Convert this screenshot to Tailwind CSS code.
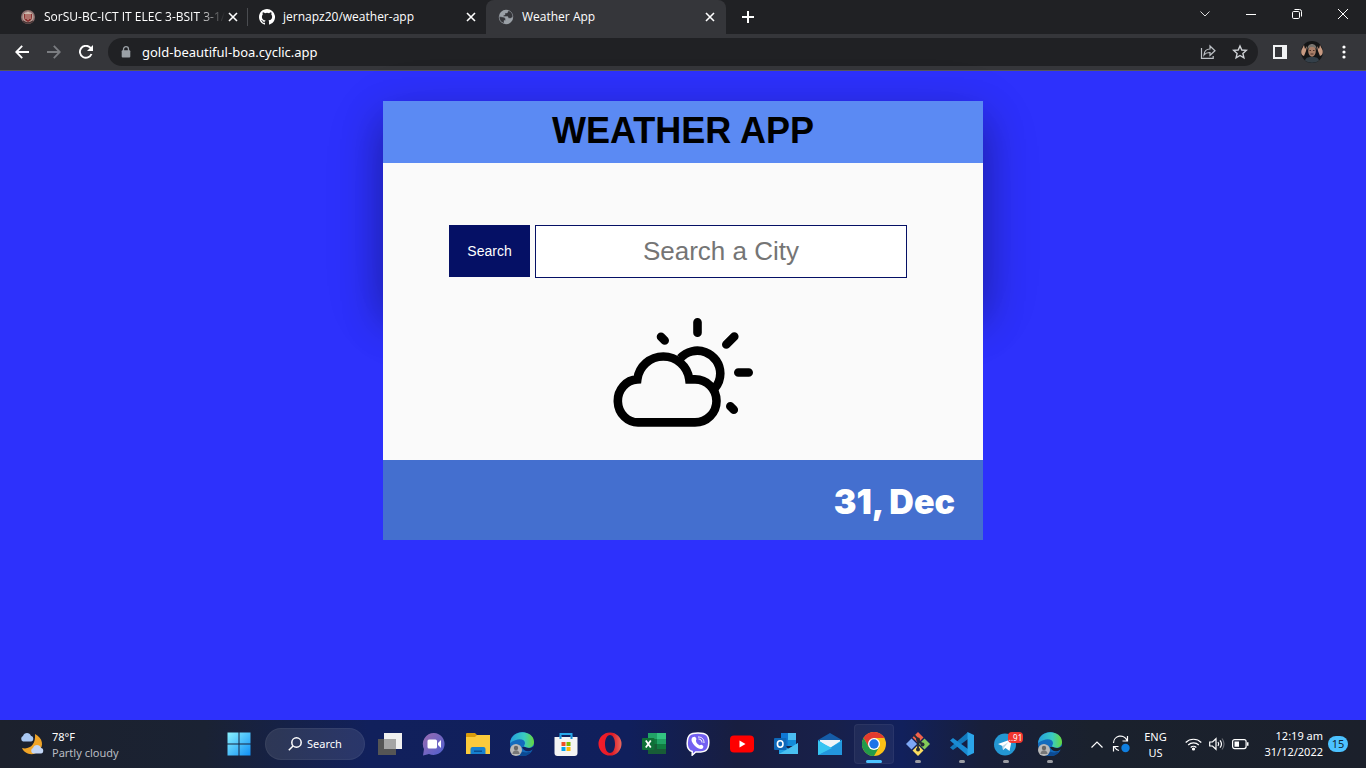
<!DOCTYPE html>
<html lang="en">
<head>
<meta charset="utf-8">
<title>Weather App</title>
<script src="https://cdn.jsdelivr.net/npm/@tailwindcss/browser@4"></script>
</head>
<body class="flex h-screen flex-col overflow-hidden bg-[#2d31fc] font-['Noto_Sans',sans-serif] text-white">

<!-- Tab strip -->
<header class="shrink-0 bg-[#202124]">
  <div class="flex h-[34px] items-stretch">
    <div class="flex w-[247px] items-center pl-5 pr-[7px]">
      <svg class="mr-2 size-4 shrink-0" viewBox="0 0 16 16"><circle cx="8" cy="8" r="7" fill="#8d7070"/><circle cx="8" cy="8" r="5.500" fill="#b9a39a"/><path d="M4 5h8v3c0 3-2 4-4 5-2-1-4-2-4-5z" fill="#8a2f2f"/><path d="M6 4v6M8 3v8M10 4v6" stroke="#e8d9c8" stroke-width=".8"/><path d="M3 12q5 4 10 0" stroke="#4c3535" fill="none" stroke-width="1.500"/></svg>
      <span class="flex-1 whitespace-nowrap font-['Open_Sans',sans-serif] text-xs [mask-image:linear-gradient(to_right,black_85%,transparent)]">SorSU-BC-ICT IT ELEC 3-BSIT 3-1/</span>
      <button aria-label="Close tab" class="grid size-4 shrink-0 place-items-center"><svg class="size-[10px]" viewBox="0 0 10 10" stroke="#fff" stroke-width="1.600"><path d="M1 1l8 8M9 1l-8 8"/></svg></button>
    </div>
    <div class="my-2 w-px bg-[#4a4c50]"></div>
    <div class="flex w-[238px] items-center pl-[11px] pr-[7px]">
      <svg class="mr-2 size-4 shrink-0" viewBox="0 0 16 16" fill="#fff"><path d="M8 0C3.58 0 0 3.58 0 8c0 3.54 2.29 6.53 5.47 7.59.4.07.55-.17.55-.38v-1.49c-2.23.48-2.7-.95-2.7-.95-.36-.92-.89-1.17-.89-1.17-.73-.5.05-.49.05-.49.81.06 1.23.83 1.23.83.72 1.23 1.88.87 2.34.67.07-.52.28-.87.51-1.07-1.78-.2-3.64-.89-3.64-3.95 0-.87.31-1.59.82-2.15-.08-.2-.36-1.02.08-2.12 0 0 .67-.21 2.2.82a7.6 7.6 0 0 1 4 0c1.53-1.04 2.2-.82 2.2-.82.44 1.1.16 1.92.08 2.12.51.56.82 1.27.82 2.15 0 3.07-1.87 3.75-3.65 3.95.29.25.54.73.54 1.48v2.19c0 .21.15.46.55.38A8 8 0 0 0 8 0"/></svg>
      <span class="flex-1 whitespace-nowrap font-['Open_Sans',sans-serif] text-xs">jernapz20/weather-app</span>
      <button aria-label="Close tab" class="grid size-4 shrink-0 place-items-center"><svg class="size-[10px]" viewBox="0 0 10 10" stroke="#fff" stroke-width="1.600"><path d="M1 1l8 8M9 1l-8 8"/></svg></button>
    </div>
    <div class="flex w-[240px] items-center rounded-t-lg bg-[#35363a] pl-3 pr-2">
      <svg class="mr-2 size-4 shrink-0" viewBox="0 0 16 16"><circle cx="8" cy="8" r="7.200" fill="#9aa0a6"/><path d="M10.500 1.500 9.200 4H7v2H5.500v1.500h4.200l.8 1.800h2.300l2-1.300a6.800 6.800 0 0 0-4.300-6.500M1.200 7.500l5 .8 1.300 1.500v1.700H6v2.800A7 7 0 0 1 1.200 7.500" fill="#35363a" stroke="#9aa0a6" stroke-width=".4"/></svg>
      <span class="flex-1 whitespace-nowrap font-['Open_Sans',sans-serif] text-xs">Weather App</span>
      <button aria-label="Close tab" class="grid size-4 shrink-0 place-items-center"><svg class="size-[10px]" viewBox="0 0 10 10" stroke="#fff" stroke-width="1.600"><path d="M1 1l8 8M9 1l-8 8"/></svg></button>
    </div>
    <button aria-label="New tab" class="grid w-11 place-items-center"><svg class="size-3" viewBox="0 0 12 12" stroke="#fff" stroke-width="2"><path d="M6 0v12M0 6h12"/></svg></button>
    <div class="ml-auto flex pb-[6px]">
      <button aria-label="Search tabs" class="grid w-[46px] place-items-center"><svg class="h-[6px] w-[10px]" viewBox="0 0 10 6" fill="none" stroke="#ddd"><path d="M.5.5 5 5 9.500.5"/></svg></button>
      <button aria-label="Minimize" class="grid w-[46px] place-items-center"><svg class="size-[10px]" viewBox="0 0 10 10" stroke="#fff"><path d="M0 5.500h10"/></svg></button>
      <button aria-label="Restore" class="grid w-[46px] place-items-center"><svg class="size-[10px]" viewBox="0 0 10 10" fill="none" stroke="#fff"><rect x=".5" y="2.500" width="7" height="7" rx="1.200"/><path d="M2.500.5h5a2 2 0 0 1 2 2v5"/></svg></button>
      <button aria-label="Close" class="grid w-[46px] place-items-center"><svg class="size-[10px]" viewBox="0 0 10 10" stroke="#fff"><path d="M0 0l10 10M10 0 0 10"/></svg></button>
    </div>
  </div>
  <!-- Toolbar -->
  <div class="flex h-[37px] items-center border-b border-[#55565b] bg-[#35363a]">
    <button aria-label="Back" class="ml-[6px] grid size-8 place-items-center"><svg class="size-[14px]" viewBox="0 0 14 14" fill="none" stroke="#fff" stroke-width="1.800"><path d="M14 7H1.500M7.200.9 1.200 7l6 6.100"/></svg></button>
    <button aria-label="Forward" class="grid size-8 place-items-center"><svg class="size-[14px]" viewBox="0 0 14 14" fill="none" stroke="#7b7d81" stroke-width="1.800"><path d="M0 7h12.500M6.800.9l6 6.100-6 6.100"/></svg></button>
    <button aria-label="Reload" class="grid size-8 place-items-center"><svg class="size-[14px]" viewBox="0 0 14 14"><path d="M12.500 9A6 6 0 1 1 11.300 2.700L13 4.500" fill="none" stroke="#fff" stroke-width="1.900"/><path d="M14 0v6H8z" fill="#fff"/></svg></button>
    <div class="ml-[6px] flex h-7 flex-1 items-center gap-[10px] rounded-full bg-[#202124] pl-[13px] pr-[10px]">
      <svg class="h-3 w-[10px] shrink-0" viewBox="0 0 10 12"><path d="M2.500 5V3.200a2.500 2.500 0 0 1 5 0V5" fill="none" stroke="#9aa0a6" stroke-width="1.300"/><rect x=".7" y="4.300" width="8.600" height="7.300" rx="1" fill="#9aa0a6"/></svg>
      <input aria-label="Address" value="gold-beautiful-boa.cyclic.app" class="min-w-0 flex-1 bg-transparent pt-px pl-px text-[13px] outline-none">
      <button aria-label="Share"><svg class="size-4" viewBox="0 0 16 16" fill="none" stroke="#bdc1c6" stroke-width="1.200"><path d="M1.500 4v10.400h11.700V12"/><path d="M4 11c.3-4 2.500-6 6-6V2l5 4.700-5 4.600V8.500C7.500 8.400 5.500 9 4 11z"/></svg></button>
      <button aria-label="Bookmark" class="ml-[6px]"><svg class="size-4" viewBox="0 0 16 16" fill="none" stroke="#d0d3d7" stroke-width="1.400"><path d="m8 2 1.800 4 4.500.4-3.400 3 1 4.400L8 11.500l-3.900 2.300 1-4.400-3.400-3L6.200 6z"/></svg></button>
    </div>
    <button aria-label="Side panel" class="ml-[14px]"><svg class="size-4" viewBox="0 0 16 16"><path fill="#f1f3f4" fill-rule="evenodd" d="M1 1h14v14H1zM3 3v10h7V3z"/></svg></button>
    <button aria-label="Profile" class="ml-3"><svg class="size-6" viewBox="0 0 24 24"><circle cx="12" cy="12" r="11" fill="#141516"/><path d="M1.500 10 4 5l1 4 2-3-1 5-2 5c-3-1-3-4-2.500-6M22.500 10 20 5l-1 4-2-3 1 5 2 5c3-1 3-4 2.500-6" fill="#c79a82"/><path d="M5 20.500c1-3.500 4-3.500 7-3.500s6 0 7 3.500c-4 3-10 3-14 0" fill="#34404a"/><ellipse cx="12" cy="11" rx="3.800" ry="5.800" fill="#a87e68"/><path d="M7.500 10c-1-8 10-8 9 0-1-3-3-3-4.500-3s-3.500 0-4.500 3" fill="#77736d"/><path d="M9.500 10.500H11M13 10.500h1.500M10.500 14h3" stroke="#4a3028"/></svg></button>
    <button aria-label="Menu" class="ml-3 mr-[14px]"><svg class="h-[14px] w-4" viewBox="0 0 16 14" fill="#fff"><circle cx="8" cy="2" r="1.600"/><circle cx="8" cy="7" r="1.600"/><circle cx="8" cy="12" r="1.600"/></svg></button>
  </div>
</header>

<!-- Weather page -->
<main class="min-h-0 flex-1 px-4 pt-[30px] font-['Liberation_Sans',Arial,sans-serif]">
  <div class="mx-auto h-[200px] max-w-[600px] shadow-[0_19px_38px_rgba(0,0,0,0.3),0_15px_60px_rgba(0,0,0,0.12)]">
    <h1 class="bg-[#5b8af3] pb-[2px] text-center text-4xl/[60px] font-bold text-black">WEATHER APP</h1>
    <div class="flex flex-col items-center bg-[#fafafa] pt-[62px] pb-[33px]">
      <form class="flex w-full items-start gap-[5px] pl-[66px] pr-[76px]" onsubmit="return false">
        <button class="h-[52px] w-[81px] shrink-0 bg-[#051065] text-sm text-white">Search</button>
        <input aria-label="City" placeholder="Search a City" class="h-[53px] min-w-0 flex-1 border border-[#051065] bg-white text-center text-[26px] text-black outline-none placeholder:text-[#757575]">
      </form>
      <svg class="mt-10 h-[109px] w-[140px]" viewBox="0 0 140 109" fill="none" stroke="#000" stroke-width="8.600">
        <path d="M67.300 40.200A23 23 0 0 1 107.300 55.500A23 23 0 0 1 102 70"/>
        <path d="M24.300 61.400A20.300 21.500 0 0 0 26 104.400H82A21.500 21.500 0 0 0 82 61.400H76.300A26.200 26.200 0 0 0 24.300 61.400z" fill="#fafafa"/>
        <path d="M84.500 4.300v10.400M125.300 54.500h10.400M113.300 26.500l8-8M48 18.800l3.700 3.700M117.300 88.300l3.500 3.500" stroke-linecap="round"/>
      </svg>
    </div>
    <footer class="flex h-20 items-center justify-end bg-[#446fcf] pt-[2px] pr-7 text-[34px] font-black text-white"><time datetime="2022-12-31" class="font-['Inter','Liberation_Sans',sans-serif]">31, Dec</time></footer>
  </div>
</main>

<!-- Taskbar -->
<nav aria-label="Taskbar" class="flex h-12 shrink-0 items-stretch justify-between bg-[linear-gradient(90deg,#1c212d_0%,#1a2233_15%,#11205c_27%,#101f5c_46%,#181e40_54%,#18204a_61%,#11205c_66%,#181f3a_72%,#1a212d_80%,#1b202b_100%)]">
  <div class="flex">
    <button class="flex w-[216px] items-center gap-2 pl-[19px] text-left text-[11px]/4">
      <svg class="size-[25px]" viewBox="0 0 25 25"><path d="M16 2c8 4 9 12 4 17-5 5-14 4-17-3 8 2 14-4 13-14z" fill="#f0a427"/><path d="M4 9.500a3 3 0 0 1 0-5.500c1-4 7-4 8 0 3 0 3 5.500 0 5.500z" fill="#a9c8f3"/><path d="M14 21.500a3 3 0 0 1 0-5.500c1-4 7-4 8 0 3 0 3 5.500 0 5.500z" fill="#c3d6f5"/></svg>
      <span class="pt-px">78°F<br><span class="text-[#b9bcc2]">Partly cloudy</span></span>
    </button>
    <button aria-label="Start" class="grid w-[46px] place-items-center"><svg class="size-6" viewBox="0 0 24 24"><defs><linearGradient id="win" gradientUnits="userSpaceOnUse" x1="0" y1="0" x2="24" y2="24"><stop stop-color="#8df4ff"/><stop offset="1" stop-color="#0d8df5"/></linearGradient></defs><path fill="url(#win)" d="M.5.5h11v11H.5zM12.500.5h11v11h-11zM.5 12.500h11v11H.5zM12.500 12.500h11v11h-11z"/></svg></button>
    <button class="mx-[3px] my-2 flex w-[100px] items-center justify-center gap-[5px] rounded-full border border-white/5 bg-white/10 text-[11px]"><svg class="size-[14px]" viewBox="0 0 14 14" fill="none" stroke="#fff" stroke-width="1.500"><circle cx="8.500" cy="5.500" r="4.700"/><path d="M5 9 .8 13.200"/></svg>Search</button>
    <div class="flex">
      <button aria-label="Task view" class="grid w-11 place-items-center"><svg class="size-6" viewBox="0 0 24 24"><path d="M6 1h18v16H6z" fill="#f0f0f0"/><path d="M0 7h18v16H0z" fill="#555"/><path d="M6 7h12v10H6z" fill="#a5a5a5"/></svg></button>
      <button aria-label="Chat" class="grid w-11 place-items-center"><svg class="size-6" viewBox="0 0 24 24"><defs><linearGradient id="chat" x2="1" y2="1"><stop stop-color="#9a6bb0"/><stop offset="1" stop-color="#4c5fd0"/></linearGradient></defs><path d="M12 1a11 11 0 1 1-5 21L1 23.500 2 17A11 11 0 0 1 12 1" fill="url(#chat)"/><rect x="5.500" y="7.500" width="9.500" height="9" rx="1.500" fill="#fff"/><path d="m16 11 3-3v8l-3-3z" fill="#fff"/></svg></button>
      <button aria-label="File Explorer" class="grid w-11 place-items-center"><svg class="size-6" viewBox="0 0 24 24"><path d="M0 2q0-1 1-1h8l2 2v5H0z" fill="#d99b0c"/><path d="M0 5h9l2-2h13v19H0z" fill="#fbca3c"/><path d="M4.500 22v-5q0-2 2-2h11q2 0 2 2v5z" fill="#1680d0"/><path d="M8 18.500h8V20H8z" fill="#0b4f91"/></svg></button>
      <button aria-label="Edge" class="grid w-11 place-items-center"><svg class="size-6" viewBox="0 0 24 24"><defs><linearGradient id="eg" x2="1"><stop stop-color="#249fdf"/><stop offset=".6" stop-color="#3acbc0"/><stop offset="1" stop-color="#66d83c"/></linearGradient></defs><circle cx="12" cy="12" r="12" fill="#146bbd"/><path d="M0 11C2-4 24-2 24 10c0 5-5 7-9 5-2-1 0-2 0-4 0-4-7-6-15 0" fill="url(#eg)"/><path d="M9 12c-3 6 5 11 13 7-6 9-18 5-18-1 0-4 3-6 5-6" fill="#0b4a93"/><path d="M15 15c3 2 7 1 9-1v3l-4 2c-4 1-7-1-8-4z" fill="#12215c"/><circle cx="6" cy="18" r="6" fill="#b9b9b9"/><circle cx="6" cy="16" r="2.200" fill="#666"/><path d="M2.500 22c0-5 7-5 7 0" fill="#777"/></svg></button>
      <button aria-label="Microsoft Store" class="grid w-11 place-items-center"><svg class="size-6" viewBox="0 0 24 24"><path d="M6.500 7V2h11v5" fill="none" stroke="#28a8ea" stroke-width="2"/><path d="M.5 5h23v16q0 3-3 3h-17q-3 0-3-3z" fill="#f4f4f4"/><path d="M5.500 4h2v3h-2zM16.500 4h2v3h-2z" fill="#1f8fd5"/><path d="M7.500 10h4v4h-4z" fill="#f04f25"/><path d="M12.500 10h4v4h-4z" fill="#7fb900"/><path d="M7.500 15h4v4h-4z" fill="#02a2ed"/><path d="M12.500 15h4v4h-4z" fill="#feb902"/></svg></button>
      <button aria-label="Opera" class="grid w-11 place-items-center"><svg class="size-6" viewBox="0 0 24 24"><defs><linearGradient id="op"><stop stop-color="#f61c2b"/><stop offset=".6" stop-color="#df1b26"/><stop offset="1" stop-color="#e86a60"/></linearGradient></defs><path fill="url(#op)" fill-rule="evenodd" d="M12 .5a11.500 11.500 0 1 0 0 23 11.500 11.500 0 0 0 0-23m0 2.500c3 0 5 4 5 9s-2 9-5 9-5-4-5-9 2-9 5-9"/></svg></button>
      <button aria-label="Excel" class="grid w-11 place-items-center"><svg class="size-6" viewBox="0 0 24 24"><path d="M6 1h9v6H6z" fill="#21a366"/><path d="M15 1h9v6h-9z" fill="#33c481"/><path d="M6 7h9v5H6z" fill="#107c41"/><path d="M15 7h9v5h-9z" fill="#21a366"/><path d="M6 12h18v10H6z" fill="#185c37"/><path d="M15 12h9v5h-9z" fill="#107c41"/><rect y="6" width="12.500" height="12" rx="1" fill="#0f7037"/><path d="m3.800 8.500 5 7M8.800 8.500l-5 7" stroke="#fff" stroke-width="1.800"/></svg></button>
      <button aria-label="Viber" class="grid w-11 place-items-center"><svg class="size-6" viewBox="0 0 24 24"><path d="M12 1C4 1 1.500 3 1.200 11c-.2 5 1.300 7.500 5 8.500v3.700l3.500-3.300C20 20.500 22.500 18 22.800 11 23 3 20 1 12 1" fill="#7360f2" stroke="#fff" stroke-width="1.500"/><path d="M7 5c-3 2-1 6 2 9s7 4 8 2 0-2-1-3-2 1-3 0-3-2-3-4 1-1 0-3-2-1-3-1" fill="#fff"/><path d="M12 5c4 0 6 2 6 6M12.500 7c2 0 3.500 1.500 3.500 3.500" fill="none" stroke="#fff"/></svg></button>
      <button aria-label="YouTube" class="grid w-11 place-items-center"><svg class="size-6" viewBox="0 0 24 24"><rect y="3.500" width="24" height="17" rx="4" fill="#f00"/><path d="M9.500 8.500v7l6-3.500z" fill="#fff"/></svg></button>
      <button aria-label="Outlook" class="grid w-11 place-items-center"><svg class="size-6" viewBox="0 0 24 24"><path d="M7 1h15v13H7z" fill="#0f78d4"/><path d="M14 1h8v7h-8z" fill="#4abdf2"/><path d="M14 8h8v6h-8z" fill="#138bd8"/><path d="M5 22V11l10 6 9-6v11z" fill="#1c9de2"/><path d="m5 22 19-11v11z" fill="#49bff0"/><rect y="6" width="12.500" height="12" rx="1" fill="#0e67b8"/><ellipse cx="6.200" cy="12" rx="2.800" ry="3.200" fill="none" stroke="#fff" stroke-width="1.600"/></svg></button>
      <button aria-label="Mail" class="grid w-11 place-items-center"><svg class="size-6" viewBox="0 0 24 24"><path d="M0 8 12 1l12 7v7H0z" fill="#155ca8"/><path d="M2 8h20v5l-10 4L2 13z" fill="#f1f4f7"/><path d="m0 8 12 8 12-8v15H0z" fill="#2ab8ee"/><path d="m0 23 24-14v14z" fill="#2396de"/><path d="M0 23V9l14 7z" fill="#38c5f2"/></svg></button>
      <button aria-label="Chrome" class="relative mx-[2px] my-1 grid w-10 place-items-center rounded border border-white/5 bg-white/5"><svg class="size-6" viewBox="0 0 24 24"><circle cx="12" cy="12" r="12" fill="#fbc116"/><path d="M1.600 6A12 12 0 0 1 22.400 6H12l-5.200 9z" fill="#e33b2e"/><path d="M1.600 6A12 12 0 0 0 12 24l5.200-9H6.800z" fill="#229a4a"/><circle cx="12" cy="12" r="6" fill="#fff"/><circle cx="12" cy="12" r="4.700" fill="#1a73e8"/></svg><span class="absolute bottom-0 h-[3px] w-4 rounded-full bg-[#4cc2ff]"></span></button>
      <button aria-label="Git" class="relative grid w-11 place-items-center"><svg class="size-6" viewBox="0 0 24 24"><path d="m12 0 5.500 5.500L12 11 6.500 5.500z" fill="#f1624b"/><path d="m5.500 6.500L11 12l-5.500 5.500L0 12z" fill="#7da7f5"/><path d="m18.500 6.500L24 12l-5.500 5.500L13 12z" fill="#82c959"/><path d="m12 13 5.500 5.500L12 24l-5.500-5.500z" fill="#fadc60"/><path d="m8 3 4 4v11M12 8l4.500 4.500" fill="none" stroke="#252b35" stroke-width="1.800"/><circle cx="12" cy="7.500" r="2" fill="#252b35"/><circle cx="16.500" cy="12.500" r="2" fill="#252b35"/><circle cx="12" cy="17.500" r="2" fill="#252b35"/></svg><span class="absolute bottom-[5px] h-[3px] w-[6px] rounded-full bg-[#9a9ca3]"></span></button>
      <button aria-label="Visual Studio Code" class="relative grid w-11 place-items-center"><svg class="size-6" viewBox="0 0 24 24"><path d="M18 0v7L3 18l-3-2.500z" fill="#1279bd"/><path d="M0 8.500 3 6l15 11v7z" fill="#1a8bd3"/><path d="m17.500 0 6.500 3v18l-6.500 3z" fill="#2ba5ea"/></svg><span class="absolute bottom-[5px] h-[3px] w-[6px] rounded-full bg-[#9a9ca3]"></span></button>
      <button aria-label="Telegram" class="relative grid w-11 place-items-center"><svg class="size-6" viewBox="0 0 24 24"><circle cx="11" cy="12.500" r="11" fill="#2497d3"/><path d="m4 12 14-5-2.500 12-4-3-2.500 2-.5-4z" fill="#fff"/><path d="m8.500 14 6-4-4 5-1.500 3z" fill="#b9d8e9"/></svg><span class="absolute left-6 top-3 w-[15px] rounded-sm bg-[#f1352f] text-center text-[8px]/[11px]">..91</span><span class="absolute bottom-[5px] h-[3px] w-[6px] rounded-full bg-[#9a9ca3]"></span></button>
      <button aria-label="Edge profile" class="relative grid w-11 place-items-center"><svg class="size-6" viewBox="0 0 24 24"><circle cx="12" cy="12" r="12" fill="#146bbd"/><path d="M0 11C2-4 24-2 24 10c0 5-5 7-9 5-2-1 0-2 0-4 0-4-7-6-15 0" fill="url(#eg)"/><path d="M9 12c-3 6 5 11 13 7-6 9-18 5-18-1 0-4 3-6 5-6" fill="#0b4a93"/><path d="M15 15c3 2 7 1 9-1v3l-4 2c-4 1-7-1-8-4z" fill="#1a212d"/><circle cx="6" cy="18" r="6" fill="#b9b9b9"/><circle cx="6" cy="16" r="2.200" fill="#666"/><path d="M2.500 22c0-5 7-5 7 0" fill="#777"/></svg><span class="absolute bottom-[5px] h-[3px] w-[6px] rounded-full bg-[#9a9ca3]"></span></button>
    </div>
  </div>
  <div class="flex items-center text-[11px]/4">
    <button aria-label="Show hidden icons" class="grid w-6 place-items-center"><svg class="h-[7px] w-3" viewBox="0 0 12 7" fill="none" stroke="#fff" stroke-width="1.200"><path d="m.5 6.500 5.500-5.500 5.500 5.500"/></svg></button>
    <button aria-label="Updates" class="grid w-6 place-items-center"><svg class="size-[18px]" viewBox="0 0 18 18"><path d="M1.500 8A7 7 0 0 1 15 5.500M15.500 1v5h-5M7 15.500A7 7 0 0 1 2.500 12M1.500 16.500v-5h5" fill="none" stroke="#fff" stroke-width="1.200"/><circle cx="13.500" cy="13" r="4.200" fill="#0f7fe0"/></svg></button>
    <button class="w-11 pt-px text-center">ENG<br>US</button>
    <button aria-label="Network, volume and battery" class="flex items-center gap-[7px] px-2">
      <svg class="h-4 w-[17px]" viewBox="0 0 17 16" fill="none" stroke="#fff" stroke-width="1.200"><path d="M.7 6.500a11 11 0 0 1 15.600 0M3.200 9a7.500 7.500 0 0 1 10.600 0M5.700 11.500a4 4 0 0 1 5.600 0"/><circle cx="8.500" cy="13" r="1" fill="#fff"/></svg>
      <svg class="size-4" viewBox="0 0 16 16" fill="none" stroke="#fff" stroke-width="1.200"><path d="M.7 6h2.800L7 2.700v10.600L3.500 10H.7zM9 6q1.500 2 0 4M11 4.300q3 3.700 0 7.400"/><path d="M13 2.500q4 5.500 0 11" stroke="#666a72"/></svg>
      <svg class="h-4 w-[17px]" viewBox="0 0 17 16"><rect x=".6" y="3.600" width="13.500" height="9" rx="2" fill="none" stroke="#fff" stroke-width="1.200"/><path d="M2.500 5.500H7v5.200H2.500zM15 6.300h1.500v3.500H15z" fill="#fff"/></svg>
    </button>
    <button class="flex items-center gap-[5px] pl-[7px] pr-[18px] text-right"><span>12:19 am<br>31/12/2022</span><span class="grid h-4 w-5 place-items-center rounded-full bg-[#4cc2ff] text-[#102433]">15</span></button>
  </div>
</nav>
</body>
</html>
